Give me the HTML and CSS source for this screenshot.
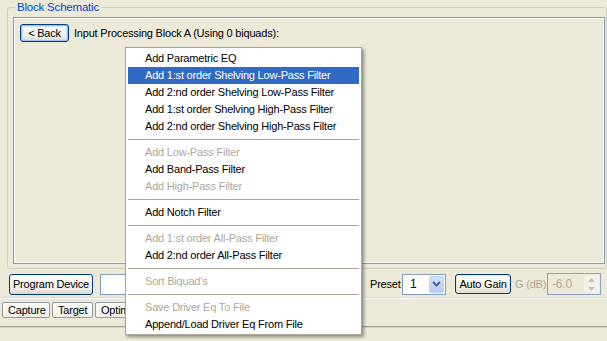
FILE: index.html
```html
<!DOCTYPE html>
<html>
<head>
    <meta charset="UTF-8">
    <title>Block Schematic</title>
    <link rel="stylesheet" href="styles.css">
</head>
<body>
    <div class="window">
        <fieldset class="group">
            <legend>Block Schematic</legend>
            <div class="schematic">
                <div class="crumb">
                    <button class="btn btn-default back">&lt; Back</button>
                    <span>Input Processing Block A (Using 0 biquads):</span>
                </div>
            </div>
        </fieldset>

        <div class="toolbar">
            <button class="btn program">Program Device</button>
            <div class="field"></div>
            <span class="preset-label">Preset</span>
            <div class="combo">
                <span class="combo-value">1</span>
                <span class="combo-btn">
                    <svg width="9" height="6" viewBox="0 0 9 6"><polyline points="1,1 4.5,4.5 8,1" fill="none" stroke="#4d6185" stroke-width="2"/></svg>
                </span>
            </div>
            <button class="btn autogain">Auto Gain</button>
            <span class="gain-label">G (dB)</span>
            <div class="spin">
                <span class="spin-value">-6.0</span>
                <span class="spin-btns">
                    <span class="spin-btn"><svg width="7" height="4" viewBox="0 0 7 4"><polygon points="0,4 3.5,0 7,4" fill="#c5c2b2"/></svg></span>
                    <span class="spin-btn"><svg width="7" height="4" viewBox="0 0 7 4"><polygon points="0,0 3.5,4 7,0" fill="#c5c2b2"/></svg></span>
                </span>
            </div>
        </div>

        <div class="tab-line"></div>
        <div class="tabs">
            <div class="tab capture">Capture</div>
            <div class="tab target">Target</div>
            <div class="tab optim">Optimize</div>
        </div>
        <div class="status"></div>

        <div class="menu">
            <div class="item">Add Parametric EQ</div>
            <div class="item selected">Add 1:st order Shelving Low-Pass Filter</div>
            <div class="item">Add 2:nd order Shelving Low-Pass Filter</div>
            <div class="item">Add 1:st order Shelving High-Pass Filter</div>
            <div class="item">Add 2:nd order Shelving High-Pass Filter</div>
            <div class="sep"></div>
            <div class="item disabled">Add Low-Pass Filter</div>
            <div class="item">Add Band-Pass Filter</div>
            <div class="item disabled">Add High-Pass Filter</div>
            <div class="sep"></div>
            <div class="item">Add Notch Filter</div>
            <div class="sep"></div>
            <div class="item disabled">Add 1:st order All-Pass Filter</div>
            <div class="item">Add 2:nd order All-Pass Filter</div>
            <div class="sep"></div>
            <div class="item disabled">Sort Biquad's</div>
            <div class="sep"></div>
            <div class="item disabled">Save Driver Eq To File</div>
            <div class="item">Append/Load Driver Eq From File</div>
        </div>
    </div>
</body>
</html>
```

FILE: styles.css
```css
body {
    margin: 0;
    background-color: #ece9d8;
    font-family: "Liberation Sans", Arial, sans-serif;
    font-size: 11px;
    letter-spacing: -0.2px;
    color: #000;
}
.window {
    position: relative;
    width: 607px;
    height: 341px;
    overflow: hidden;
}
.group {
    box-sizing: border-box;
    width: 600px;
    margin: 1px 0 0 7px;
    padding: 3px 1px 4px 5px;
    border: 1px solid #d0d0bf;
    border-radius: 3px;
    min-width: 0;
}
.group legend {
    color: #0046d5;
    line-height: 13px;
    font-size: 11.5px;
    padding: 0 2px;
    margin-left: 2px;
}
.schematic {
    box-sizing: border-box;
    height: 247px;
    border: 1px solid #7f9db9;
    box-shadow: inset 0 0 0 1px #fff;
    padding: 6px 6px;
}
.crumb {
    display: flex;
    align-items: center;
    gap: 5px;
}
.btn {
    box-sizing: border-box;
    font-family: inherit;
    font-size: 11px;
    letter-spacing: -0.2px;
    color: #000;
    padding: 0;
    border: 1px solid #003c74;
    border-radius: 3px;
    background: linear-gradient(#ffffff 0%, #f4f4f0 45%, #ebe9e0 80%, #d8d4c8 100%);
    white-space: nowrap;
}
.btn-default {
    box-shadow: inset 0 0 0 1px #9dbcf0, inset 0 0 0 2px #cfe0fa;
}
.back {
    width: 49px;
    height: 18px;
}
.toolbar {
    display: flex;
    align-items: center;
    height: 22px;
    margin-top: 4px;
    padding-left: 9px;
}
.program {
    width: 84px;
    height: 21px;
}
.field {
    box-sizing: border-box;
    width: 250px;
    height: 21px;
    margin-left: 7px;
    background: #fff;
    border: 1px solid #7f9db9;
}
.preset-label {
    width: 32px;
    margin-left: 20px;
}
.combo {
    box-sizing: border-box;
    display: flex;
    align-items: stretch;
    width: 44px;
    height: 21px;
    background: #fff;
    border: 1px solid #7f9db9;
    padding: 1px;
}
.combo-value {
    flex: 1;
    padding-left: 6px;
    line-height: 17px;
    font-size: 12px;
}
.combo-btn {
    display: flex;
    align-items: center;
    justify-content: center;
    width: 15px;
    background: linear-gradient(#d3e1fd, #b7cbf7);
    border: 1px solid #bccff8;
    border-radius: 2px;
    box-sizing: border-box;
}
.autogain {
    width: 56px;
    height: 20px;
    margin-left: 9px;
    box-shadow: inset 0 0 0 1px #e6e4da;
}
.gain-label {
    width: 32px;
    margin-left: 4px;
    color: #aca899;
    white-space: nowrap;
}
.spin {
    box-sizing: border-box;
    display: flex;
    width: 54px;
    height: 22px;
    border: 1px solid #8ea3c0;
    padding: 1px;
}
.spin-value {
    flex: 1;
    padding-left: 3px;
    line-height: 18px;
    font-size: 12px;
    color: #aca899;
}
.spin-btns {
    display: flex;
    flex-direction: column;
    width: 15px;
}
.spin-btn {
    flex: 1;
    display: flex;
    align-items: center;
    justify-content: center;
    background: #f3f2ea;
    border-radius: 2px;
}
.tab-line {
    height: 1px;
    margin-top: 3px;
    background: #fff;
    box-shadow: 0 -1px 0 #dcd8c8;
}
.tabs {
    display: flex;
    gap: 2px;
    margin-top: 3px;
    padding-left: 2px;
}
.tab {
    box-sizing: border-box;
    height: 16px;
    line-height: 14px;
    padding: 0 5px;
    border: 1px solid #919b9c;
    border-radius: 2px;
    background: linear-gradient(#fbfbf8, #f0efe6);
    white-space: nowrap;
}
.capture { width: 48px; }
.target { width: 41px; }
.optim { width: 60px; }
.status {
    height: 1px;
    margin-top: 8px;
    background: #a7a497;
    box-shadow: 0 1px 0 #d6d2c2;
}
.menu {
    position: absolute;
    left: 125px;
    top: 47px;
    box-sizing: border-box;
    width: 237px;
    padding: 2px 2px 1px 2px;
    background: #fff;
    border: 1px solid #aca899;
    box-shadow: 2px 2px 3px rgba(0, 0, 0, 0.4);
}
.item {
    height: 17px;
    line-height: 17px;
    padding-left: 17px;
    white-space: nowrap;
}
.item.selected {
    background: #316ac5;
    color: #fff;
}
.item.disabled {
    color: #aca899;
}
.sep {
    height: 9px;
    box-sizing: border-box;
    padding-top: 4px;
}
.sep::before {
    content: "";
    display: block;
    height: 1px;
    background: #aca899;
}
```
